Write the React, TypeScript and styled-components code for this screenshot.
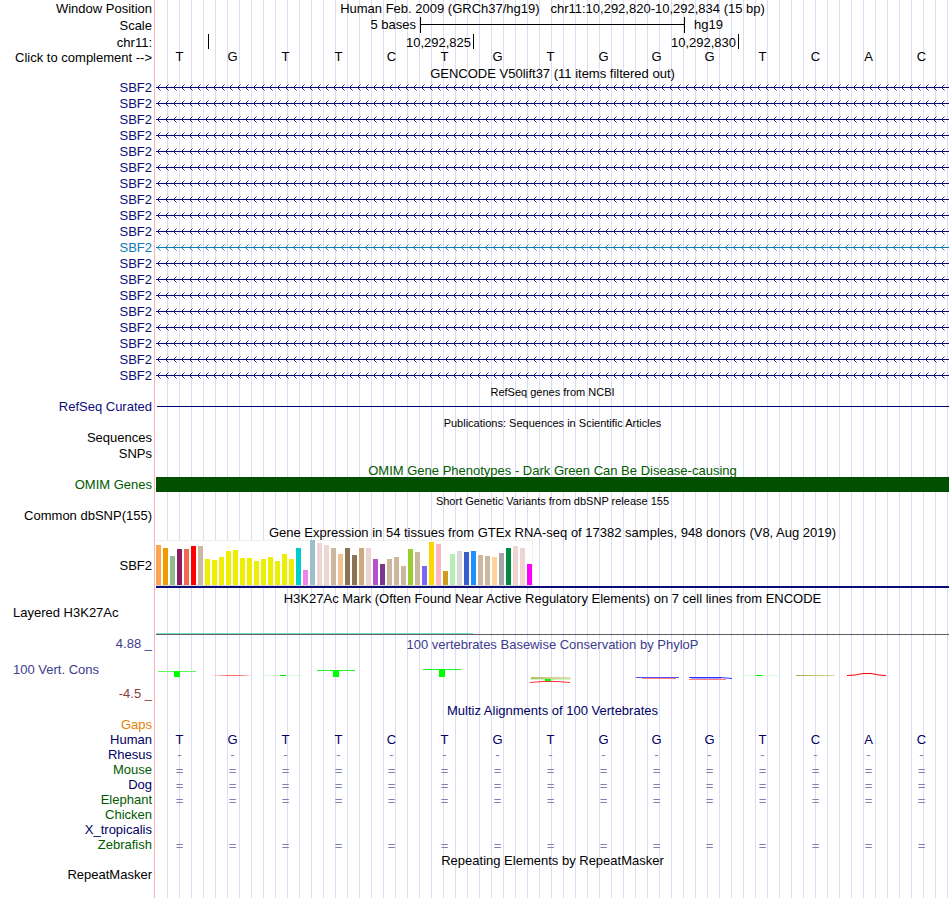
import React from "react";
import styled, { createGlobalStyle } from "styled-components";

const LABEL_WIDTH = 155;

const GlobalStyle = createGlobalStyle`
  *, *::before, *::after { box-sizing: border-box; }
  body { margin: 0; background: #fff; }
`;

const Browser = styled.main`
  min-height: 100vh;
  font-family: "Liberation Sans", Arial, Helvetica, sans-serif;
  font-size: 13px;
  color: #000;
  overflow: hidden;
  background-color: #fff;
  background-image:
    linear-gradient(to right, #fff 154px, #ffb4b4 154px, #ffb4b4 155px, #fff 155px, #fff 156px, transparent 156px),
    linear-gradient(to right, transparent 11px, #dcdcf5 11px);
  background-size: 100% 100%, 12px 100%;
  background-position: 0 0, 156px 0;
  background-repeat: no-repeat, repeat-x;
`;

const Row = styled.div<{ $h?: number }>`
  display: grid;
  grid-template-columns: ${LABEL_WIDTH}px minmax(0, 1fr);
  height: ${(p) => p.$h ?? 16}px;
`;

const Label = styled.div<{ $color?: string; $left?: boolean; $middle?: boolean }>`
  display: flex;
  align-items: ${(p) => (p.$middle ? "center" : "flex-start")};
  justify-content: ${(p) => (p.$left ? "flex-start" : "flex-end")};
  padding: 0 3px 0 13px;
  line-height: 15px;
  white-space: pre;
  color: ${(p) => p.$color ?? "#000"};
`;

const LabelLink = styled.a`
  color: inherit;
  text-decoration: none;
`;

const ComplementButton = styled.button`
  border: 0;
  padding: 0;
  background: none;
  font: inherit;
  color: inherit;
  line-height: 15px;
  white-space: nowrap;
  cursor: pointer;
`;

const Track = styled.div`
  grid-column: 2;
  padding: 0 1px;
  min-width: 0;
`;

const Title = styled.div<{ $small?: boolean; $low?: boolean; $color?: string }>`
  grid-column: 2;
  display: flex;
  align-items: center;
  justify-content: center;
  padding-top: ${(p) => (p.$low ? 1 : 0)}px;
  line-height: 15px;
  white-space: pre;
  font-size: ${(p) => (p.$small ? 11 : 13)}px;
  color: ${(p) => p.$color ?? "#000"};
`;

const ScaleTrack = styled.div`
  display: grid;
  grid-template-columns: repeat(3, 1fr);
  align-items: start;
  line-height: 15px;
`;

const ScaleText = styled.span<{ $end?: boolean }>`
  text-align: ${(p) => (p.$end ? "right" : "left")};
  padding: 0 4px 0 9px;
`;

const ScaleBar = styled.div`
  height: 16px;
  border: solid #000;
  border-width: 0 1px;
  background: linear-gradient(#000, #000) 0 7px / 100% 1px no-repeat;
`;

const PositionTrack = styled.div`
  display: grid;
  grid-template-columns: 1fr 5fr 5fr 4fr;
`;

const PositionCell = styled.span<{ $tick?: boolean }>`
  height: 15px;
  line-height: 17px;
  text-align: right;
  padding-right: 2px;
  border-left: ${(p) => (p.$tick ? "1px solid #000" : "0")};
`;

const Bases = styled.div<{ $color?: string; $line?: number }>`
  display: grid;
  grid-template-columns: repeat(15, minmax(0, 1fr));
  color: ${(p) => p.$color ?? "#000"};
  line-height: ${(p) => p.$line ?? 14}px;
`;

const Base = styled.span`
  padding-right: 4px;
  text-align: center;
`;

const ArrowSvg = styled.svg`
  display: block;
  width: 100%;
  height: 16px;
`;

const ThinLine = styled.div`
  height: 1px;
  margin: 7px 0 0 1px;
  background: #00006e;
`;

const SolidBar = styled.div`
  height: 15px;
  background: #005000;
`;

const Expression = styled.div`
  border-bottom: 2px solid #0c0c78;
`;

const ExpressionPlot = styled.div`
  display: flex;
  align-items: flex-end;
  gap: 2px;
  width: max-content;
  height: 46px;
  padding-right: 1px;
  background: #fff;
  border-bottom: 1px solid #d8d8d8;
  box-shadow: inset 0 1px #f0f0f0, inset -1px 0 #f0f0f0;
`;

const ExpressionBar = styled.div<{ $h: number; $color: string }>`
  width: 5px;
  height: ${(p) => p.$h}px;
  background: ${(p) => p.$color};
`;

const SignalBase = styled.div`
  height: 30px;
  border-bottom: 1px solid #606060;
  background: linear-gradient(#70e0c0, #70e0c0) 0 100% / 40% 1px no-repeat;
`;

const Wiggle = styled.svg`
  display: block;
  width: 100%;
  height: 34px;
`;

const NAVY = "#0c0c78";
const BLUE = "#1078b4";
const DARK_GREEN = "#005a00";
const MULTIZ_NAVY = "#000064";
const SEQUENCE = "TGTTCTGTGGGTCAC".split("");

const TAN = "#cdb79e";
const YELLOW = "#eeee00";
const MISTY = "#eed5d2";

const tissues: [number, string][] = [
  [40, "#ffa54f"], [37, "#ee9a00"], [29, "#8fbc8f"], [36, "#8b1c62"], [36, "#ee6a50"],
  [39, "#ff0000"], [39, TAN], [26, YELLOW], [25, YELLOW], [28, YELLOW], [34, YELLOW],
  [35, YELLOW], [27, YELLOW], [27, YELLOW], [24, YELLOW], [26, YELLOW], [28, YELLOW],
  [24, YELLOW], [31, YELLOW], [26, YELLOW], [37, "#00cdcd"], [15, "#ee82ee"],
  [45, "#9ac0cd"], [42, MISTY], [40, MISTY], [37, TAN], [31, "#eec591"], [37, "#8b7355"],
  [30, "#8b7355"], [37, "#cdaa7d"], [37, MISTY], [26, "#b452cd"], [21, "#7a378b"],
  [26, TAN], [28, TAN], [19, TAN], [36, "#9acd32"], [33, TAN], [19, "#7a67ee"],
  [43, "#ffd700"], [41, "#ffb6c1"], [14, "#cd9b1d"], [31, "#b4eeb4"], [34, "#d9d9d9"],
  [33, "#3a5fcd"], [34, "#1e90ff"], [30, TAN], [29, TAN], [28, "#ffd39b"],
  [32, "#a6a6a6"], [37, "#008b45"], [39, MISTY], [37, MISTY], [21, "#ff00ff"],
];

const species: { name: string; color: string; glyph?: string }[] = [
  { name: "Rhesus", color: MULTIZ_NAVY, glyph: "-" },
  { name: "Mouse", color: DARK_GREEN, glyph: "=" },
  { name: "Dog", color: MULTIZ_NAVY, glyph: "=" },
  { name: "Elephant", color: DARK_GREEN, glyph: "=" },
  { name: "Chicken", color: DARK_GREEN },
  { name: "X_tropicalis", color: MULTIZ_NAVY },
  { name: "Zebrafish", color: DARK_GREEN, glyph: "=" },
];

const BaseRow = ({ glyphs, color, line }: { glyphs: string[]; color?: string; line?: number }) => (
  <Bases $color={color} $line={line}>
    {glyphs.map((g, i) => (
      <Base key={i}>{g}</Base>
    ))}
  </Bases>
);

const TitleRow = ({ h = 15, small, color, children }: {
  h?: number; small?: boolean; color?: string; children: React.ReactNode;
}) => (
  <Row $h={h}>
    <Title $small={small} $low={h === 15} $color={color}>{children}</Title>
  </Row>
);

const Transcript = ({ index, color }: { index: number; color: string }) => {
  const id = `intron-${index}`;
  return (
    <Row>
      <Label $color={color}><LabelLink href="#gencode">SBF2</LabelLink></Label>
      <Track>
        <ArrowSvg aria-hidden="true">
          <defs>
            <pattern id={id} width="8" height="16" patternUnits="userSpaceOnUse">
              <path d="M4.5 4.5L1.5 7.5L4.5 10.5" fill="none" stroke={color} strokeWidth="0.9" />
              <rect y="7" width="8" height="1" fill={color} shapeRendering="crispEdges" />
            </pattern>
          </defs>
          <rect width="100%" height="16" fill={`url(#${id})`} />
        </ArrowSvg>
      </Track>
    </Row>
  );
};

const Conservation = () => (
  <Wiggle viewBox="0 0 795 34" preserveAspectRatio="none" aria-label="PhyloP conservation scores">
    <defs>
      <linearGradient id="fade-red">
        <stop offset="0" stopColor="#f66" stopOpacity="0.1" />
        <stop offset="0.4" stopColor="#f66" />
        <stop offset="0.7" stopColor="#f66" />
        <stop offset="1" stopColor="#f66" stopOpacity="0.1" />
      </linearGradient>
      <linearGradient id="fade-olive">
        <stop offset="0" stopColor="#a8a830" />
        <stop offset="0.5" stopColor="#c8c878" />
        <stop offset="1" stopColor="#a8a830" stopOpacity="0.4" />
      </linearGradient>
    </defs>
    <g fill="#60f860">
      <rect x="3" y="19" width="38" height="1" />
      <rect x="162" y="18" width="38" height="1" fill="#20f820" />
      <rect x="268" y="17" width="38" height="1" fill="#20f820" />
    </g>
    <g fill="#00ff00">
      <rect x="19" y="19" width="6" height="6" />
      <rect x="178" y="18" width="6" height="7" />
      <rect x="284" y="17" width="6" height="8" />
    </g>
    <rect x="57" y="23" width="39" height="1" fill="url(#fade-red)" />
    <rect x="109" y="23" width="38" height="1" fill="#d8f8d8" />
    <rect x="125" y="23" width="6" height="1" fill="#00e800" />
    <rect x="376" y="25" width="40" height="2" fill="url(#fade-olive)" opacity="0.8" />
    <rect x="375" y="27" width="40" height="1" fill="#c8f8c8" />
    <rect x="390" y="27" width="6" height="2" fill="#00ff00" />
    <path d="M375 30.5L388 29.5H402L415 30.5" fill="none" stroke="#f33" />
    <rect x="481" y="25" width="43" height="1" fill="#5050ff" />
    <rect x="487" y="26" width="34" height="1" fill="#ff8080" />
    <path d="M534 25.5H565L577 26.5" fill="none" stroke="#3030ff" />
    <rect x="536" y="26" width="30" height="1" fill="#a0a0ff" />
    <rect x="534" y="27" width="37" height="1" fill="#ff8080" />
    <rect x="586" y="23" width="37" height="1" fill="#d8f8d8" />
    <rect x="601" y="23" width="6" height="1" fill="#00e800" />
    <rect x="641" y="23" width="39" height="1" fill="url(#fade-olive)" />
    <path d="M692 23.5L700 23L708 21.5H716L724 23L731 23.5" fill="none" stroke="#ff0000" />
  </Wiggle>
);

export default function App() {
  return (
    <>
      <GlobalStyle />
      <Browser>
        <Row $h={17}>
          <Label $middle>Window Position</Label>
          <Title>{"Human Feb. 2009 (GRCh37/hg19)   chr11:10,292,820-10,292,834 (15 bp)"}</Title>
        </Row>
        <Row $h={17}>
          <Label $middle>Scale</Label>
          <ScaleTrack>
            <ScaleText $end>5 bases</ScaleText>
            <ScaleBar />
            <ScaleText>hg19</ScaleText>
          </ScaleTrack>
        </Row>
        <Row>
          <Label $middle>chr11:</Label>
          <PositionTrack>
            <PositionCell />
            <PositionCell $tick>10,292,825</PositionCell>
            <PositionCell $tick>10,292,830</PositionCell>
            <PositionCell $tick />
          </PositionTrack>
        </Row>
        <Row>
          <Label><ComplementButton type="button">Click to complement --&gt;</ComplementButton></Label>
          <BaseRow glyphs={SEQUENCE} />
        </Row>

        <TitleRow h={14}>GENCODE V50lift37 (11 items filtered out)</TitleRow>
        {Array.from({ length: 19 }, (_, i) => (
          <Transcript key={i} index={i} color={i === 10 ? BLUE : NAVY} />
        ))}

        <TitleRow small>RefSeq genes from NCBI</TitleRow>
        <Row>
          <Label $color={NAVY}>RefSeq Curated</Label>
          <Track><ThinLine /></Track>
        </Row>

        <TitleRow small>Publications: Sequences in Scientific Articles</TitleRow>
        <Row><Label>Sequences</Label></Row>
        <Row><Label>SNPs</Label></Row>

        <TitleRow color={DARK_GREEN}>OMIM Gene Phenotypes - Dark Green Can Be Disease-causing</TitleRow>
        <Row>
          <Label $color={DARK_GREEN}>OMIM Genes</Label>
          <Track><SolidBar /></Track>
        </Row>

        <TitleRow small>Short Genetic Variants from dbSNP release 155</TitleRow>
        <Row><Label>Common dbSNP(155)</Label></Row>

        <TitleRow h={16}>Gene Expression in 54 tissues from GTEx RNA-seq of 17382 samples, 948 donors (V8, Aug 2019)</TitleRow>
        <Row $h={50}>
          <Label $middle>SBF2</Label>
          <Track>
            <Expression>
              <ExpressionPlot>
                {tissues.map(([h, color], i) => (
                  <ExpressionBar key={i} $h={h} $color={color} />
                ))}
              </ExpressionPlot>
            </Expression>
          </Track>
        </Row>

        <TitleRow>H3K27Ac Mark (Often Found Near Active Regulatory Elements) on 7 cell lines from ENCODE</TitleRow>
        <Row $h={31}>
          <Label $left>Layered H3K27Ac</Label>
          <Track><SignalBase /></Track>
        </Row>

        <Row>
          <Label $color="#3c3c8c">4.88 _</Label>
          <Title $color="#3c3c8c">100 vertebrates Basewise Conservation by PhyloP</Title>
        </Row>
        <Row $h={34}>
          <Label $left $middle $color="#3c3c8c">100 Vert. Cons</Label>
          <Conservation />
        </Row>
        <Row><Label $color="#8c3c3c">-4.5 _</Label></Row>

        <TitleRow color={MULTIZ_NAVY}>Multiz Alignments of 100 Vertebrates</TitleRow>
        <Row $h={15}><Label $color="#e68200">Gaps</Label></Row>
        <Row $h={15}>
          <Label $color={MULTIZ_NAVY}>Human</Label>
          <BaseRow glyphs={SEQUENCE} color={MULTIZ_NAVY} line={16} />
        </Row>
        {species.map((s) => (
          <Row $h={15} key={s.name}>
            <Label $color={s.color}>{s.name}</Label>
            {s.glyph && (
              <BaseRow
                glyphs={SEQUENCE.map(() => s.glyph!)}
                color="#8080b4"
                line={s.glyph === "=" ? 18 : 16}
              />
            )}
          </Row>
        ))}

        <TitleRow>Repeating Elements by RepeatMasker</TitleRow>
        <Row $h={15}><Label>RepeatMasker</Label></Row>
      </Browser>
    </>
  );
}
